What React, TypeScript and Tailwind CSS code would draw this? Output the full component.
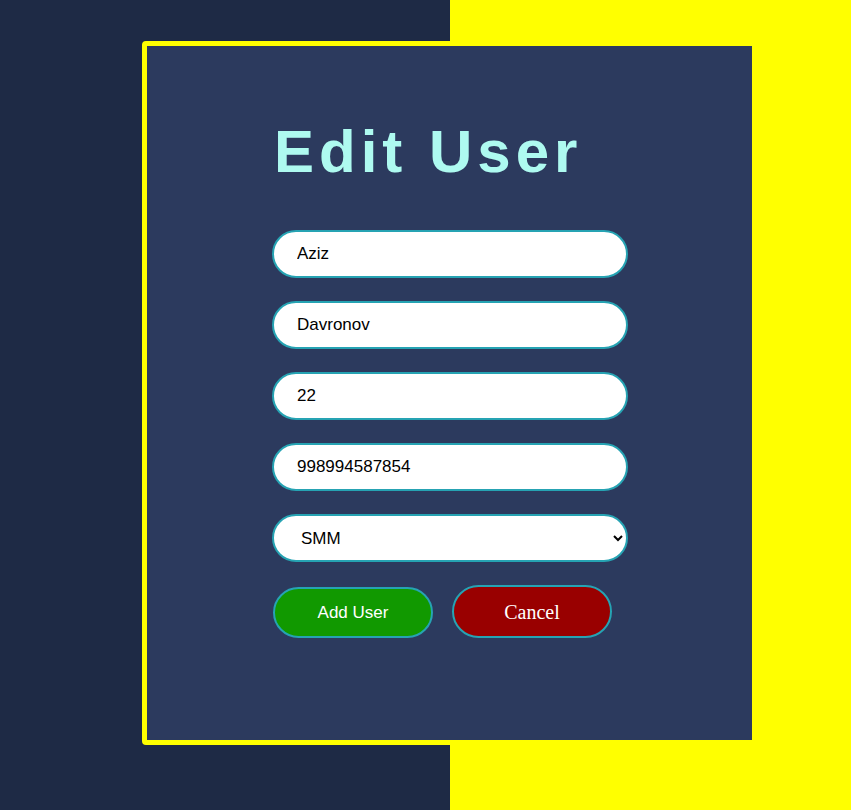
import React from 'react';

const fields = ['Aziz', 'Davronov', '22', '998994587854'];

const EditUser: React.FC = () => {
  return (
    <div className="min-h-screen bg-[linear-gradient(to_right,#1e2a45_450px,#ffff00_450px)] pt-[41px] pl-[142px] font-['Liberation_Sans',Arial,sans-serif]">
      <div className="w-[615px] h-[704px] rounded-[4px] border-[5px] border-[#ffff00] bg-[#2c3a5e] pt-[71px] pl-[125px]">
        <div className="w-[356px] flex flex-col">
          <h1 className="ml-[2px] text-[60px] leading-[69px] font-bold tracking-[5px] text-[#aefaf0]">
            Edit User
          </h1>

          <form className="mt-[44px] flex flex-col gap-[23px]" onSubmit={(e) => e.preventDefault()}>
            {fields.map((value) => (
              <input
                key={value}
                type="text"
                defaultValue={value}
                className="h-[48px] w-full rounded-full border-2 border-[#26a3b3] bg-white px-[23px] text-[17px] text-black outline-none"
              />
            ))}

            <select
              defaultValue="SMM"
              className="h-[48px] w-full rounded-full border-2 border-[#26a3b3] bg-white pl-[23px] pr-[10px] text-[17px] text-black outline-none"
            >
              <option value="SMM">SMM</option>
              <option value="Frontend">Frontend</option>
              <option value="Backend">Backend</option>
            </select>

            <div className="ml-[1px] flex items-end gap-[19px]">
              <button
                type="submit"
                className="w-[160px] h-[51px] rounded-full border-2 border-[#26a3b3] bg-[#119900] text-[17px] text-white"
              >
                Add User
              </button>
              <button
                type="button"
                className="w-[160px] h-[53px] rounded-full border-2 border-[#26a3b3] bg-[#990000] text-[20px] text-white font-['Liberation_Serif','Times_New_Roman',serif]"
              >
                Cancel
              </button>
            </div>
          </form>
        </div>
      </div>
    </div>
  );
};

export default function App() {
  return <EditUser />;
}
